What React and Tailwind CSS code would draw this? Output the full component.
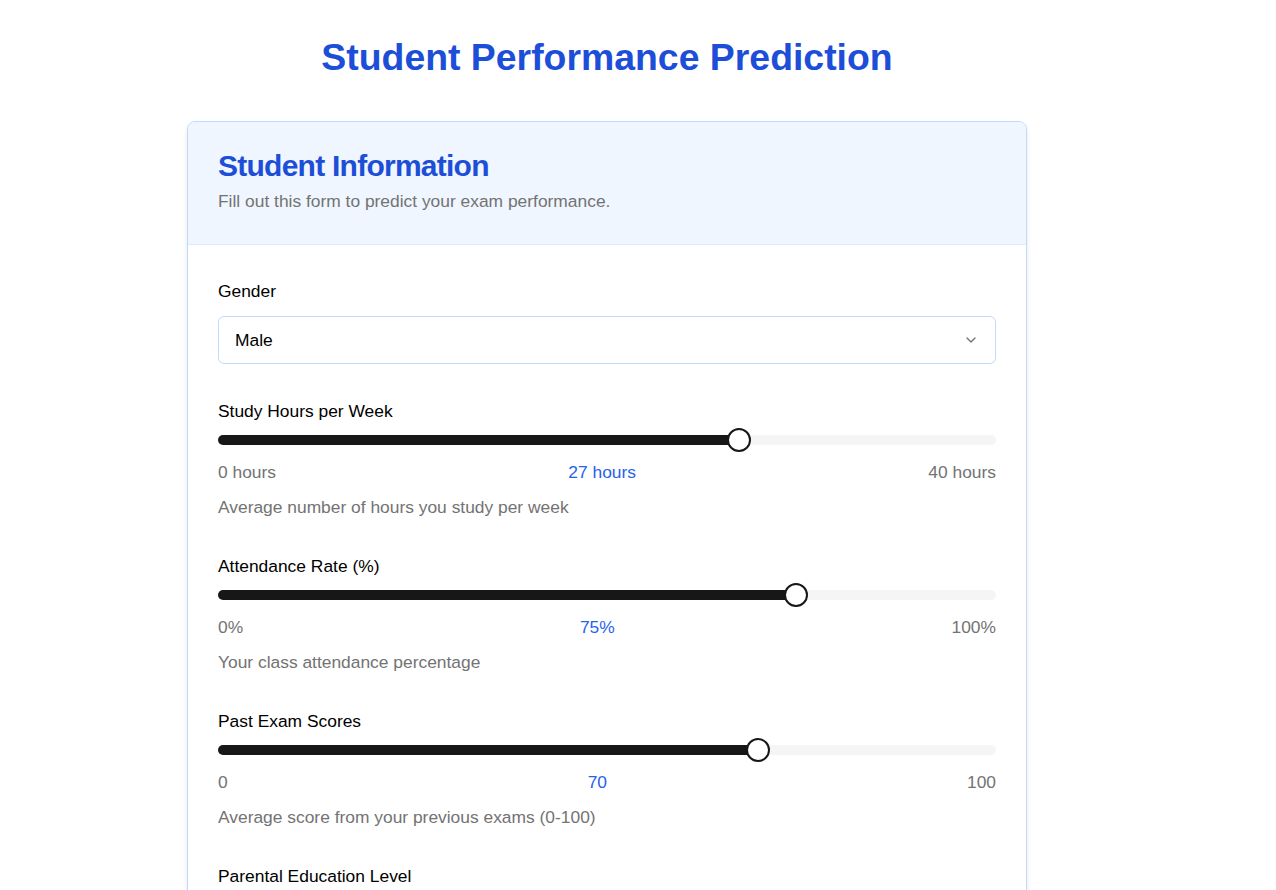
import React from "react";
import { ChevronDown } from "lucide-react";

const sliders = [
  {
    label: "Study Hours per Week",
    min: 0,
    max: 40,
    value: 27,
    unit: " hours",
    hint: "Average number of hours you study per week",
  },
  {
    label: "Attendance Rate (%)",
    min: 0,
    max: 100,
    value: 75,
    unit: "%",
    hint: "Your class attendance percentage",
  },
  {
    label: "Past Exam Scores",
    min: 0,
    max: 100,
    value: 70,
    unit: "",
    hint: "Average score from your previous exams (0-100)",
  },
];

const SliderField = ({ label, min, max, value, unit, hint }) => {
  const pct = (value - min) / (max - min);
  // keep thumb inside the track like radix does
  const offset = 12 * (1 - 2 * pct);
  return (
    <div className="mt-[35px]">
      <div className="leading-6 text-black">{label}</div>
      <div className="relative mt-[5px] flex h-6 items-center">
        <div className="relative h-2.5 w-full overflow-hidden rounded-full bg-[#f5f5f5]">
          <div
            className="absolute left-0 top-0 h-full bg-[#171717]"
            style={{ width: `${pct * 100}%` }}
          />
        </div>
        <div
          className="absolute top-0 h-6 w-6 rounded-full border-2 border-[#171717] bg-white"
          style={{ left: `calc(${pct * 100}% + ${offset - 12}px)` }}
        />
      </div>
      <div className="mt-[8px] flex justify-between leading-6">
        <span className="text-[#737373]">
          {min}
          {unit}
        </span>
        <span className="text-[#2563eb]">
          {value}
          {unit}
        </span>
        <span className="text-[#737373]">
          {max}
          {unit}
        </span>
      </div>
      <p className="mt-[11px] leading-6 text-[#737373]">{hint}</p>
    </div>
  );
};

const App = () => {
  return (
    <div className="min-h-screen bg-white font-['Liberation_Sans',Arial,sans-serif] text-[17.4px]">
      <div className="ml-[187px] w-[840px] pt-[37px]">
        <h1 className="text-center text-[37.4px] font-bold leading-10 text-[#1d4ed8]">
          Student Performance Prediction
        </h1>
        <div className="mt-11 overflow-hidden rounded-lg border border-[#bfdbfe] bg-white shadow-md">
          <div className="border-b border-[#dbeafe] bg-[#eff6ff] px-[30px] pb-[31px] pt-[29px]">
            <h2 className="text-3xl font-bold leading-none tracking-tight text-[#1d4ed8]">
              Student Information
            </h2>
            <p className="mt-2 leading-6 text-[#737373]">
              Fill out this form to predict your exam performance.
            </p>
          </div>
          <div className="px-[30px] pb-10 pt-[34px]">
            <div className="leading-6 text-black">Gender</div>
            <div className="mt-[13px] flex h-12 items-center justify-between rounded-md border border-[#bfdbfe] bg-white px-4">
              <span className="text-black">Male</span>
              <ChevronDown className="h-4 w-4 text-[#737373]" />
            </div>
            {sliders.map((s) => (
              <SliderField key={s.label} {...s} />
            ))}
            <div className="mt-[35px] leading-6 text-black">
              Parental Education Level
            </div>
            <div className="mt-[13px] flex h-12 items-center justify-between rounded-md border border-[#bfdbfe] bg-white px-4">
              <span className="text-black">Bachelor's</span>
              <ChevronDown className="h-4 w-4 text-[#737373]" />
            </div>
          </div>
        </div>
      </div>
    </div>
  );
};

export default App;
